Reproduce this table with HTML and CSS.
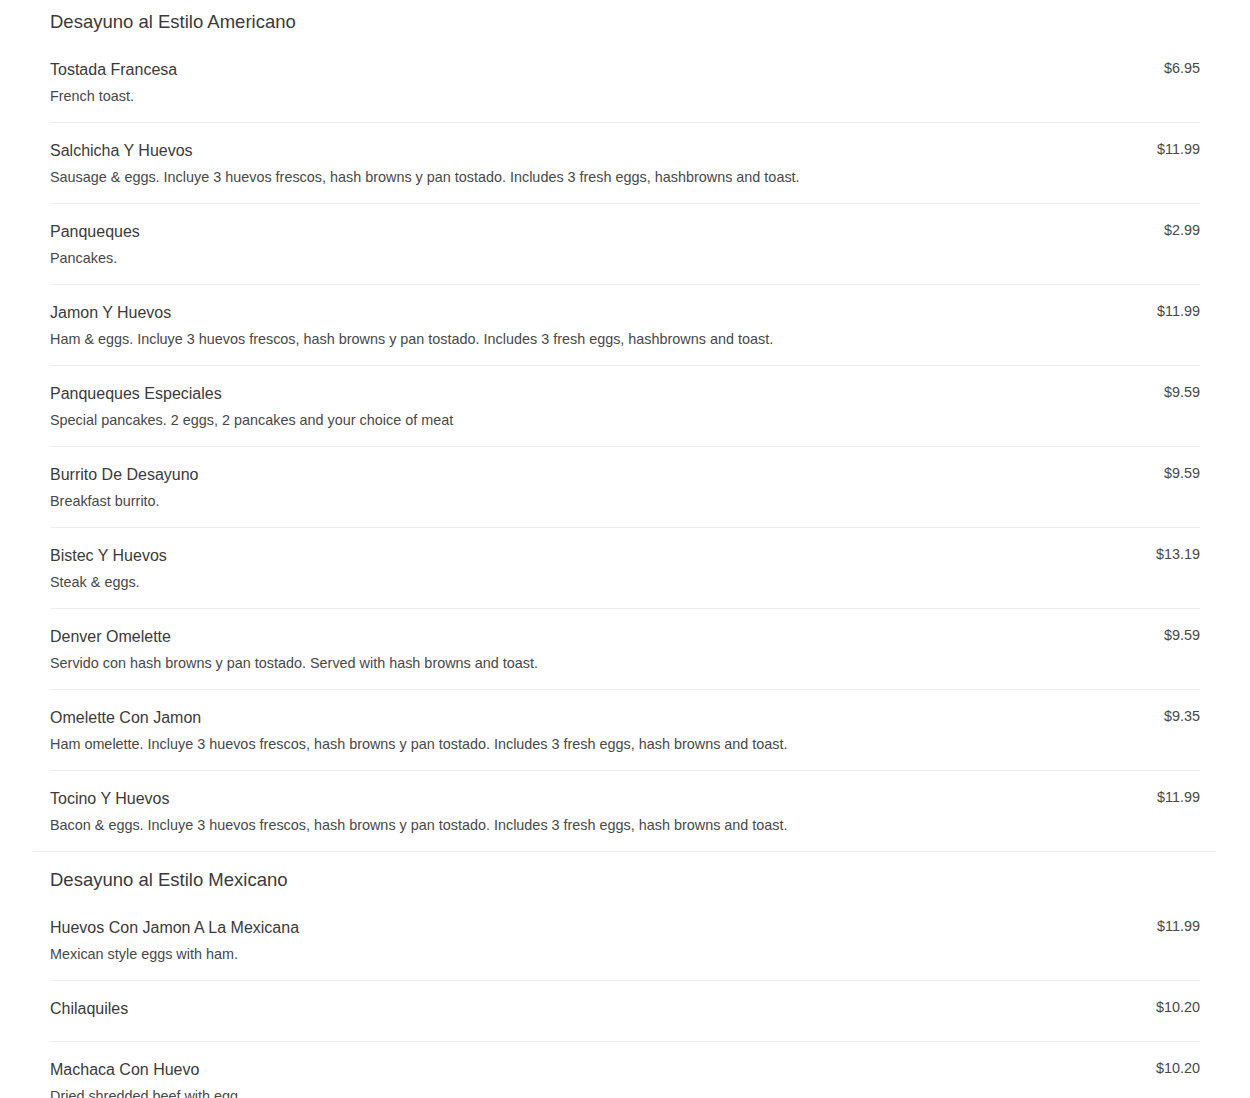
FILE: index.html
```html
<!DOCTYPE html>
<html lang="es">
<head>
    <meta charset="UTF-8">
    <meta name="viewport" content="width=device-width, initial-scale=1.0">
    <title>Menu - Desayunos</title>
    <link rel="stylesheet" href="styles.css">
</head>
<body>
    <div class="menu">
        <section class="menu-section">
            <h2 class="section-title">Desayuno al Estilo Americano</h2>
            <div class="menu-item">
                <div class="item-info">
                    <h3 class="item-name">Tostada Francesa</h3>
                    <p class="item-desc">French toast.</p>
                </div>
                <span class="item-price">$6.95</span>
            </div>
            <div class="menu-item">
                <div class="item-info">
                    <h3 class="item-name">Salchicha Y Huevos</h3>
                    <p class="item-desc">Sausage &amp; eggs. Incluye 3 huevos frescos, hash browns y pan tostado. Includes 3 fresh eggs, hashbrowns and toast.</p>
                </div>
                <span class="item-price">$11.99</span>
            </div>
            <div class="menu-item">
                <div class="item-info">
                    <h3 class="item-name">Panqueques</h3>
                    <p class="item-desc">Pancakes.</p>
                </div>
                <span class="item-price">$2.99</span>
            </div>
            <div class="menu-item">
                <div class="item-info">
                    <h3 class="item-name">Jamon Y Huevos</h3>
                    <p class="item-desc">Ham &amp; eggs. Incluye 3 huevos frescos, hash browns y pan tostado. Includes 3 fresh eggs, hashbrowns and toast.</p>
                </div>
                <span class="item-price">$11.99</span>
            </div>
            <div class="menu-item">
                <div class="item-info">
                    <h3 class="item-name">Panqueques Especiales</h3>
                    <p class="item-desc">Special pancakes. 2 eggs, 2 pancakes and your choice of meat</p>
                </div>
                <span class="item-price">$9.59</span>
            </div>
            <div class="menu-item">
                <div class="item-info">
                    <h3 class="item-name">Burrito De Desayuno</h3>
                    <p class="item-desc">Breakfast burrito.</p>
                </div>
                <span class="item-price">$9.59</span>
            </div>
            <div class="menu-item">
                <div class="item-info">
                    <h3 class="item-name">Bistec Y Huevos</h3>
                    <p class="item-desc">Steak &amp; eggs.</p>
                </div>
                <span class="item-price">$13.19</span>
            </div>
            <div class="menu-item">
                <div class="item-info">
                    <h3 class="item-name">Denver Omelette</h3>
                    <p class="item-desc">Servido con hash browns y pan tostado. Served with hash browns and toast.</p>
                </div>
                <span class="item-price">$9.59</span>
            </div>
            <div class="menu-item">
                <div class="item-info">
                    <h3 class="item-name">Omelette Con Jamon</h3>
                    <p class="item-desc">Ham omelette. Incluye 3 huevos frescos, hash browns y pan tostado. Includes 3 fresh eggs, hash browns and toast.</p>
                </div>
                <span class="item-price">$9.35</span>
            </div>
            <div class="menu-item">
                <div class="item-info">
                    <h3 class="item-name">Tocino Y Huevos</h3>
                    <p class="item-desc">Bacon &amp; eggs. Incluye 3 huevos frescos, hash browns y pan tostado. Includes 3 fresh eggs, hash browns and toast.</p>
                </div>
                <span class="item-price">$11.99</span>
            </div>
        </section>

        <section class="menu-section">
            <h2 class="section-title">Desayuno al Estilo Mexicano</h2>
            <div class="menu-item">
                <div class="item-info">
                    <h3 class="item-name">Huevos Con Jamon A La Mexicana</h3>
                    <p class="item-desc">Mexican style eggs with ham.</p>
                </div>
                <span class="item-price">$11.99</span>
            </div>
            <div class="menu-item">
                <div class="item-info">
                    <h3 class="item-name">Chilaquiles</h3>
                </div>
                <span class="item-price">$10.20</span>
            </div>
            <div class="menu-item">
                <div class="item-info">
                    <h3 class="item-name">Machaca Con Huevo</h3>
                    <p class="item-desc">Dried shredded beef with egg.</p>
                </div>
                <span class="item-price">$10.20</span>
            </div>
        </section>
    </div>
</body>
</html>
```

FILE: styles.css
```css
:root {
    --text-dark: #3a3a3a;
    --text-mid: #484848;
    --line: #eeeeee;
}

* {
    margin: 0;
    padding: 0;
    box-sizing: border-box;
}

body {
    font-family: 'Liberation Sans', Arial, sans-serif;
    background-color: #ffffff;
    color: var(--text-dark);
}

.menu-section {
    margin: 0 33px;
    padding: 0 17px;
    border-bottom: 1px solid var(--line);
}

.section-title {
    font-size: 18.5px;
    font-weight: normal;
    line-height: 24px;
    padding: 16px 0 8px;
    color: var(--text-dark);
}

.menu-section:first-child .section-title {
    padding-top: 10px;
}

.menu-item {
    display: flex;
    justify-content: space-between;
    align-items: flex-start;
    padding: 18px 0 16px;
    border-bottom: 1px solid var(--line);
}

.menu-item:last-child {
    border-bottom: none;
}

.item-name {
    font-size: 16px;
    font-weight: normal;
    line-height: 20px;
    margin-bottom: 6px;
    color: var(--text-dark);
}

.item-desc {
    font-size: 14.4px;
    line-height: 20px;
    color: var(--text-mid);
}

.item-price {
    font-size: 14.4px;
    line-height: 17px;
    color: var(--text-mid);
}
```
